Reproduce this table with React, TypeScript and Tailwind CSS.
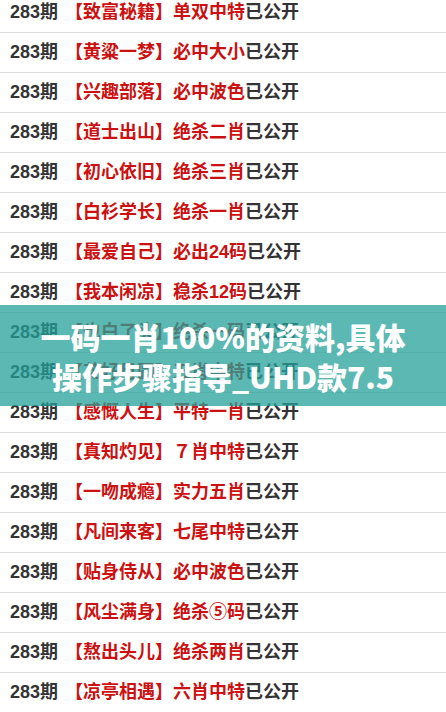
import React from "react";

const rows: [string, string][] = [
  ["致富秘籍", "单双中特"],
  ["黄粱一梦", "必中大小"],
  ["兴趣部落", "必中波色"],
  ["道士出山", "绝杀二肖"],
  ["初心依旧", "绝杀三肖"],
  ["白衫学长", "绝杀一肖"],
  ["最爱自己", "必出24码"],
  ["我本闲凉", "稳杀12码"],
  ["也白了头", "绝杀一码"],
  ["花好月圆", "五肖中特"],
  ["感慨人生", "平特一肖"],
  ["真知灼见", "７肖中特"],
  ["一吻成瘾", "实力五肖"],
  ["凡间来客", "七尾中特"],
  ["贴身侍从", "必中波色"],
  ["风尘满身", "绝杀⑤码"],
  ["熬出头儿", "绝杀两肖"],
  ["凉亭相遇", "六肖中特"],
];

export default function App() {
  return (
    <div className="relative w-[446px] h-[712px] overflow-hidden bg-white">
      <div
        className="-mt-[7px] flex flex-col"
        style={{ fontFamily: '"Liberation Sans", "Noto Sans CJK SC", sans-serif' }}
      >
        {rows.map(([name, tip], i) => (
          <div
            key={i}
            className="h-10 border-b border-[#dddddd] flex items-center pl-[10px] text-[18px] font-bold whitespace-nowrap"
          >
            <span className="text-[#333333]">283期</span>
            <span className="ml-[7px] text-[#cc1111]">【{name}】{tip}</span>
            <span className="text-[#333333]">已公开</span>
          </div>
        ))}
      </div>
      <div
        className="absolute left-0 top-[305px] w-[446px] h-[101px] bg-[rgba(36,160,153,0.75)] flex flex-col items-center justify-center text-white text-[30px] font-black leading-[40px]"
        style={{ fontFamily: '"Noto Sans CJK SC", "Noto Sans", sans-serif' }}
      >
        <div>一码一肖100%的资料,具体</div>
        <div>操作步骤指导_UHD款7.5</div>
      </div>
    </div>
  );
}
